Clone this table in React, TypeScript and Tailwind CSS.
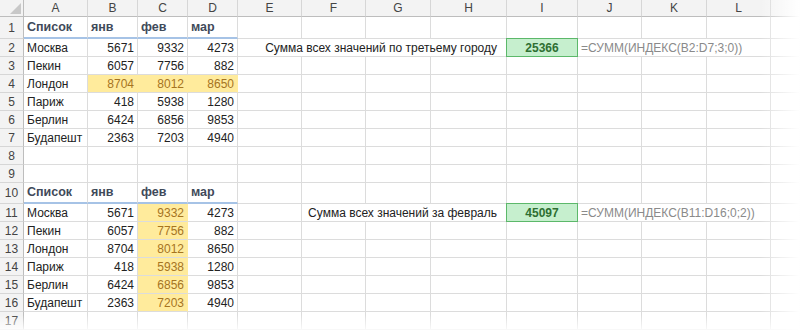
import React from 'react';

// Excel-like sheet: two copies of the city table + two INDEX formulas

type Kind = 'text' | 'num' | 'head' | 'neutral' | 'good' | 'label' | 'formula' | 'empty';

interface Cell {
    kind: Kind;
    text?: string;
    span?: 1 | 3 | 4;
}

const COLS = ['A', 'B', 'C', 'D', 'E', 'F', 'G', 'H', 'I', 'J', 'K', 'L', ''];

const CITIES: [string, number, number, number][] = [
    ['Москва', 5671, 9332, 4273],
    ['Пекин', 6057, 7756, 882],
    ['Лондон', 8704, 8012, 8650],
    ['Париж', 418, 5938, 1280],
    ['Берлин', 6424, 6856, 9853],
    ['Будапешт', 2363, 7203, 4940],
];

const headRow: Cell[] = [
    { kind: 'head', text: 'Список' },
    { kind: 'head', text: 'янв' },
    { kind: 'head', text: 'фев' },
    { kind: 'head', text: 'мар' },
];

function emptyCells(n: number): Cell[] {
    return Array.from({ length: n }, () => ({ kind: 'empty' as Kind }));
}

function buildRows(): Cell[][] {
    const rows: Cell[][] = [];
    // row 1
    rows.push([...headRow, ...emptyCells(9)]);
    // rows 2-7
    CITIES.forEach(([city, a, b, c], i) => {
        const hl = i === 2;
        const row: Cell[] = [
            { kind: 'text', text: city },
            { kind: hl ? 'neutral' : 'num', text: String(a) },
            { kind: hl ? 'neutral' : 'num', text: String(b) },
            { kind: hl ? 'neutral' : 'num', text: String(c) },
        ];
        if (i === 0) {
            row.push(
                { kind: 'label', text: 'Сумма всех значений по третьему городу', span: 4 },
                { kind: 'good', text: '25366' },
                { kind: 'formula', text: '=СУММ(ИНДЕКС(B2:D7;3;0))', span: 3 },
                { kind: 'empty' },
            );
        } else {
            row.push(...emptyCells(9));
        }
        rows.push(row);
    });
    // rows 8-9
    rows.push(emptyCells(13), emptyCells(13));
    // row 10
    rows.push([...headRow, ...emptyCells(9)]);
    // rows 11-16
    CITIES.forEach(([city, a, b, c], i) => {
        const row: Cell[] = [
            { kind: 'text', text: city },
            { kind: 'num', text: String(a) },
            { kind: 'neutral', text: String(b) },
            { kind: 'num', text: String(c) },
        ];
        if (i === 0) {
            row.push(
                { kind: 'empty' },
                { kind: 'label', text: 'Сумма всех значений за февраль', span: 3 },
                { kind: 'good', text: '45097' },
                { kind: 'formula', text: '=СУММ(ИНДЕКС(B11:D16;0;2))', span: 3 },
                { kind: 'empty' },
            );
        } else {
            row.push(...emptyCells(9));
        }
        rows.push(row);
    });
    // row 17
    rows.push(emptyCells(13));
    return rows;
}

const ROWS = buildRows();

function cellClass(kind: Kind): string {
    const base = 'flex items-center overflow-hidden whitespace-nowrap px-[3px] border-r border-b border-[#dcdcdc]';
    switch (kind) {
        case 'text':
            return `${base} text-[#222]`;
        case 'num':
            return `${base} justify-end text-[#222]`;
        case 'head':
            return `${base} font-bold text-[12.5px] text-[#3f4a5a] border-b-2 border-b-[#a6c3e6]`;
        case 'neutral':
            return `${base} justify-end bg-[#ffeb9c] text-[#a6741f] border-r-[#ffeb9c]`;
        case 'good':
            return 'flex items-center justify-center font-bold bg-[#c6efce] text-[#2e6f32] border border-[#5cb86a] -mt-px -ml-px';
        case 'label':
            return `${base} justify-end pr-[9px] text-[#222]`;
        case 'formula':
            return `${base} text-[#8a8a8a]`;
        default:
            return base;
    }
}

export default function App() {
    return (
        <div className="relative w-[800px] h-[333px] overflow-hidden bg-white font-['Liberation_Sans',Arial,sans-serif] text-[12px]">
            <div className="grid grid-cols-[24px_64px_50px_50px_50px_64px_64px_65px_76px_71px_64px_65px_64px_1fr] grid-rows-[17px_22px_repeat(8,18px)_21px_repeat(7,18px)]">
                {/* select-all corner */}
                <div className="relative bg-[#f3f3f3] border-r border-b border-[#bdbdbd]">
                    <div className="absolute right-[2px] bottom-[2px] w-0 h-0 border-l-[11px] border-l-transparent border-b-[11px] border-b-[#c8c8c8]" />
                </div>
                {COLS.map((c, i) => (
                    <div
                        key={i}
                        className="flex items-center justify-center bg-[#f3f3f3] text-[#444] border-r border-r-[#d6d6d6] border-b border-b-[#bdbdbd]"
                    >
                        {c}
                    </div>
                ))}

                {ROWS.map((row, r) => (
                    <React.Fragment key={r}>
                        <div className="flex items-center justify-center bg-[#f3f3f3] text-[#444] border-r border-r-[#bdbdbd] border-b border-b-[#d6d6d6]">
                            {r + 1}
                        </div>
                        {row.map((cell, c) => (
                            <div
                                key={c}
                                className={`${cellClass(cell.kind)} ${cell.span === 4 ? 'col-span-4' : cell.span === 3 ? 'col-span-3' : ''}`}
                            >
                                {cell.text}
                            </div>
                        ))}
                    </React.Fragment>
                ))}
            </div>

            {/* soft fade on right and bottom edges */}
            <div className="absolute top-0 right-0 w-[40px] h-full bg-linear-to-r from-white/0 to-white" />
            <div className="absolute left-0 bottom-0 w-full h-[18px] bg-linear-to-b from-white/0 to-white" />
        </div>
    );
}
